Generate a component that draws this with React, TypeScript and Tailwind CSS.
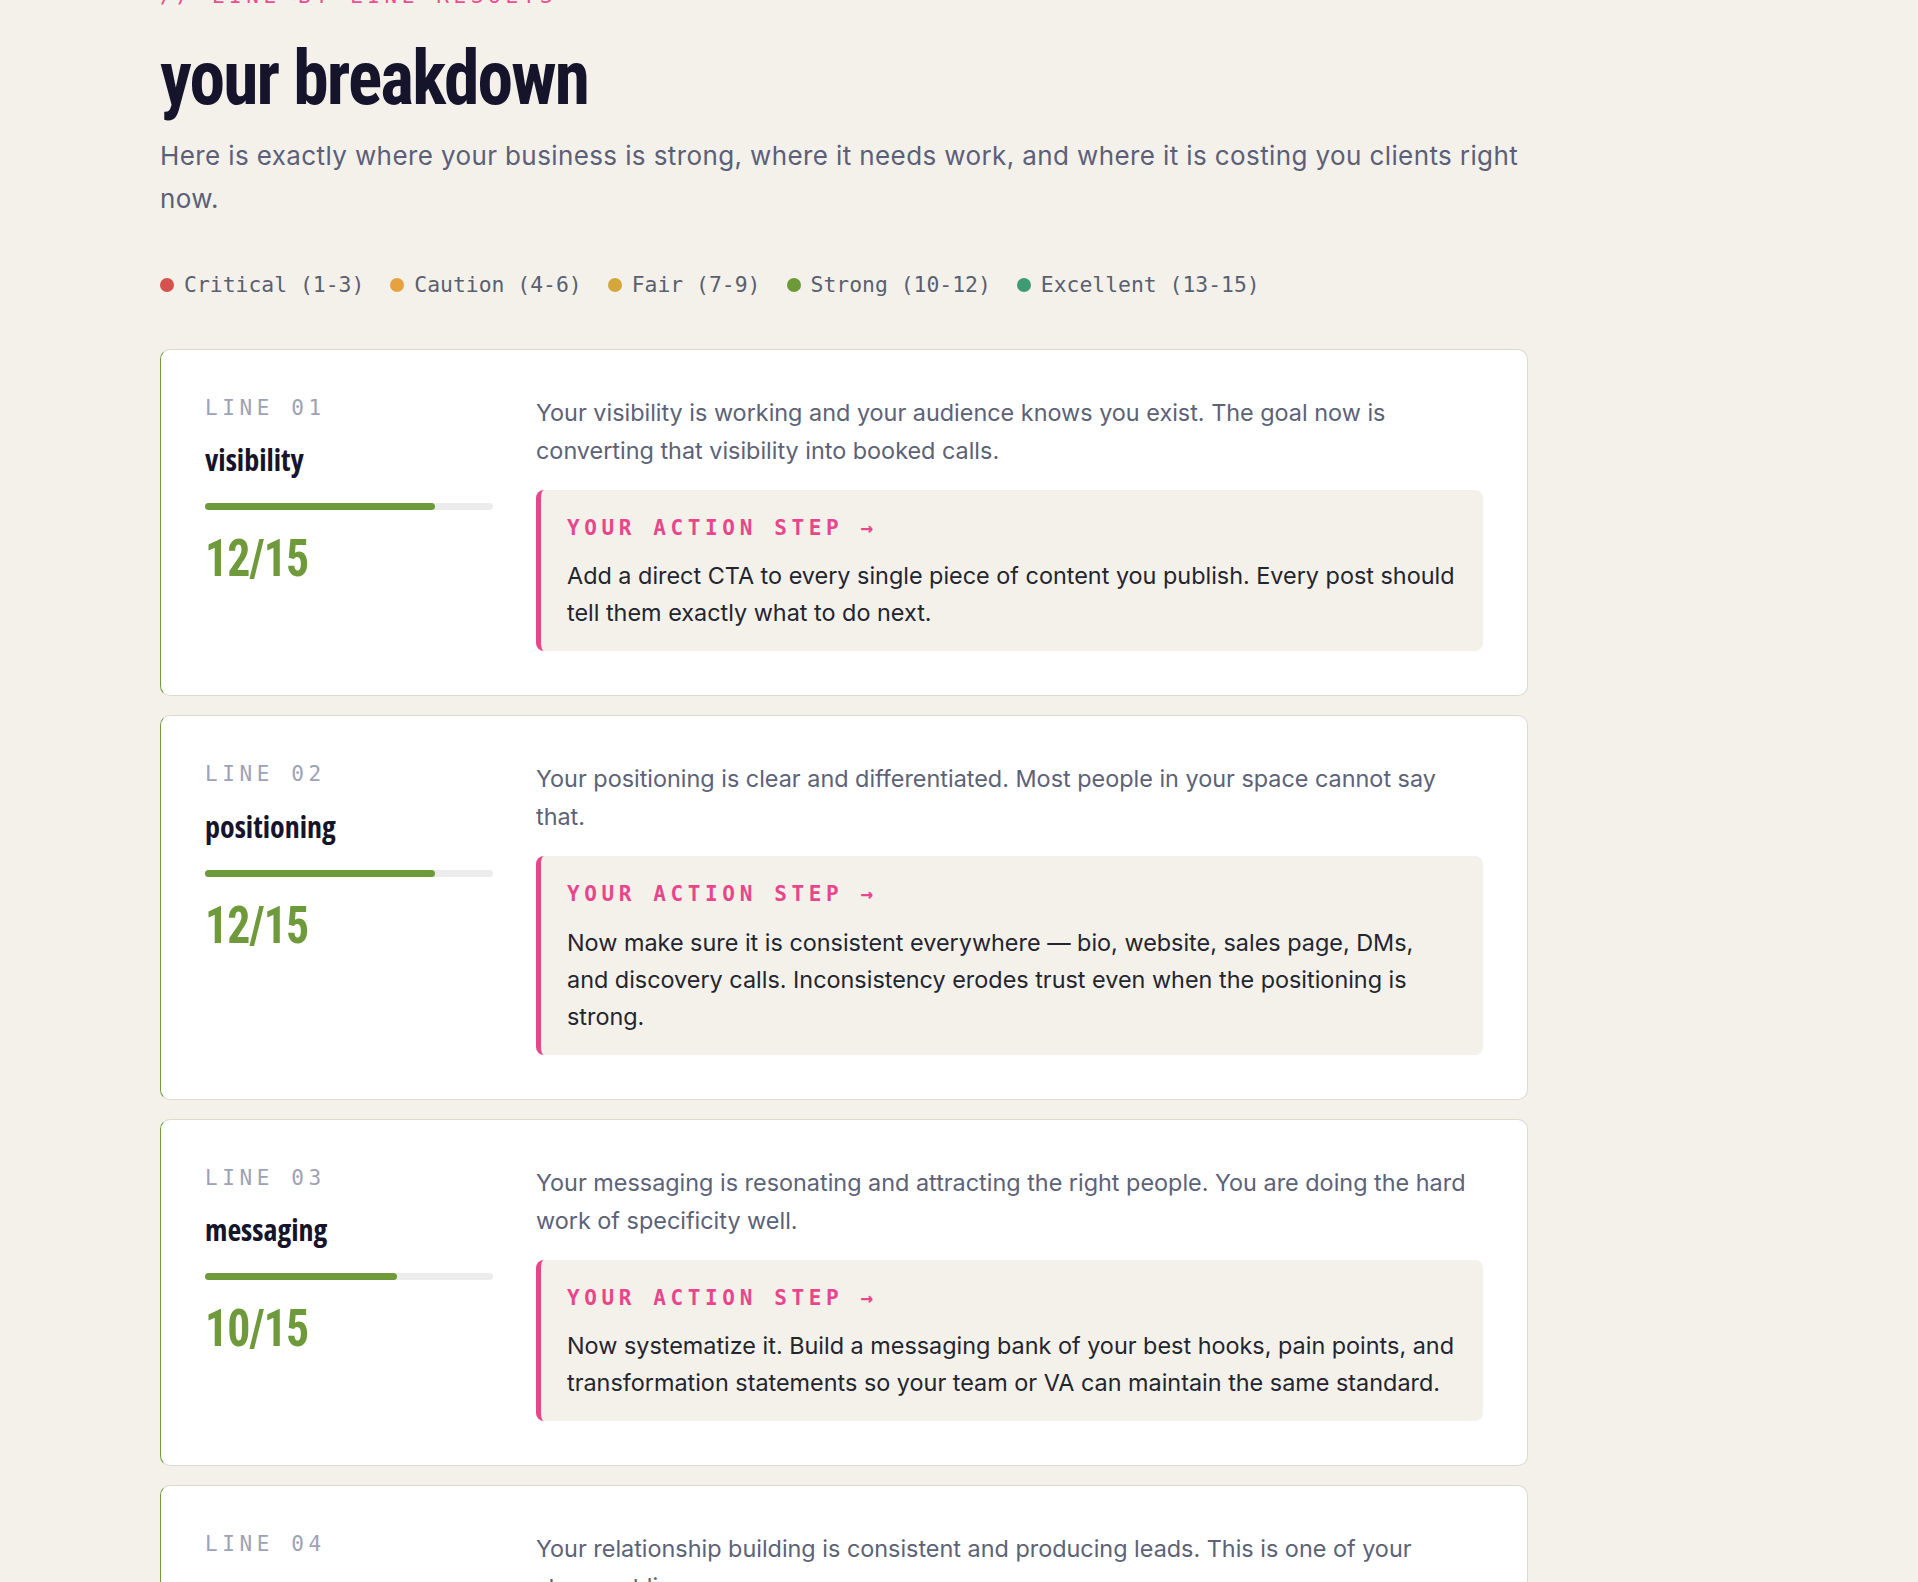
import React from "react";

type Line = {
  no: string;
  name: string;
  score: number;
  summary: string;
  action: string;
};

const LINES: Line[] = [
  {
    no: "01",
    name: "visibility",
    score: 12,
    summary:
      "Your visibility is working and your audience knows you exist. The goal now is converting that visibility into booked calls.",
    action:
      "Add a direct CTA to every single piece of content you publish. Every post should tell them exactly what to do next.",
  },
  {
    no: "02",
    name: "positioning",
    score: 12,
    summary:
      "Your positioning is clear and differentiated. Most people in your space cannot say that.",
    action:
      "Now make sure it is consistent everywhere \u2014 bio, website, sales page, DMs, and discovery calls. Inconsistency erodes trust even when the positioning is strong.",
  },
  {
    no: "03",
    name: "messaging",
    score: 10,
    summary:
      "Your messaging is resonating and attracting the right people. You are doing the hard work of specificity well.",
    action:
      "Now systematize it. Build a messaging bank of your best hooks, pain points, and transformation statements so your team or VA can maintain the same standard.",
  },
  {
    no: "04",
    name: "relationships",
    score: 11,
    summary:
      "Your relationship building is consistent and producing leads. This is one of your strongest lines.",
    action:
      "Protect this. Block time every week for genuine conversations and follow-ups so the pipeline never goes quiet.",
  },
];

const LEGEND = [
  { label: "Critical (1-3)", color: "bg-[#d4534f]" },
  { label: "Caution (4-6)", color: "bg-[#e7a23f]" },
  { label: "Fair (7-9)", color: "bg-[#d3a73a]" },
  { label: "Strong (10-12)", color: "bg-[#6b9a36]" },
  { label: "Excellent (13-15)", color: "bg-[#3f9b73]" },
];

function LineCard({ line }: { line: Line }) {
  const pct = (line.score / 15) * 100;
  return (
    <div className="mb-[19px] rounded-[10px] border border-[#ded9cd] border-l-[#6f9a3c] bg-white p-[44px]">
      <div className="grid grid-cols-[288px_1fr] gap-[43px]">
        <div>
          <div className="mt-[2px] font-[family-name:'DejaVu_Sans_Mono',monospace] text-[21px] leading-[1.2] tracking-[0.22em] text-[#9da2b6]">
            LINE {line.no}
          </div>
          <div className="mt-[21px] font-[family-name:'Open_Sans',sans-serif] text-[30px] font-bold leading-[1.2] [font-stretch:75%] text-[#16142a]">
            {line.name}
          </div>
          <div className="mt-[25px] h-[7px] w-full rounded-full bg-[#ececec]">
            <div
              className="h-full rounded-full bg-[#6f9a3c]"
              style={{ width: `${pct}%` }}
            />
          </div>
          <div className="mt-[23px] inline-block origin-left scale-x-[0.88] font-[family-name:Roboto,sans-serif] text-[52px] font-bold leading-none tracking-[-0.02em] [font-stretch:75%] text-[#6f9a3c]">
            {line.score}/15
          </div>
        </div>
        <div>
          <p className="font-[family-name:Inter,sans-serif] text-[23.4px] leading-[38px] text-[#5c6277]">
            {line.summary}
          </p>
          <div className="mt-[20px] rounded-lg border-l-[5px] border-[#e8468b] bg-[#f4f1eb] pl-[26px] pr-[26px] pt-[26px] pb-[20px]">
            <div className="font-[family-name:'DejaVu_Sans_Mono',monospace] text-[21px] font-bold leading-[1.2] tracking-[0.22em] text-[#e8468b]">
              YOUR ACTION STEP →
            </div>
            <p className="mt-4 font-[family-name:Inter,sans-serif] text-[23.4px] leading-[37px] text-[#23252f]">
              {line.action}
            </p>
          </div>
        </div>
      </div>
    </div>
  );
}

export default function App() {
  return (
    <div className="min-h-screen overflow-hidden bg-[#f4f1eb]">
      <div className="ml-[160px] w-[1368px]">
        <div className="-mt-[16px] font-[family-name:'DejaVu_Sans_Mono',monospace] text-[21px] leading-[1.2] tracking-[0.22em] text-[#ee4d8e]">
          // LINE BY LINE RESULTS
        </div>
        <h1 className="mt-[31px] origin-left scale-x-[0.94] font-[family-name:Roboto,sans-serif] text-[76px] font-bold leading-none tracking-[-0.025em] [font-stretch:75%] text-[#16142a]">
          your breakdown
        </h1>
        <p className="mt-[18px] font-[family-name:Inter,sans-serif] text-[26px] leading-[43px] tracking-[0.015em] text-[#5b6078]">
          Here is exactly where your business is strong, where it needs work,
          and where it is costing you clients right now.
        </p>
        <div className="mt-[51px] flex items-center gap-[26px]">
          {LEGEND.map((item) => (
            <div key={item.label} className="flex items-center gap-[10px]">
              <span className={`h-[14px] w-[14px] rounded-full ${item.color}`} />
              <span className="font-[family-name:'DejaVu_Sans_Mono',monospace] text-[21.4px] leading-[28px] text-[#5a5f70]">
                {item.label}
              </span>
            </div>
          ))}
        </div>
        <div className="mt-[50px]">
          {LINES.map((line) => (
            <LineCard key={line.no} line={line} />
          ))}
        </div>
      </div>
    </div>
  );
}
